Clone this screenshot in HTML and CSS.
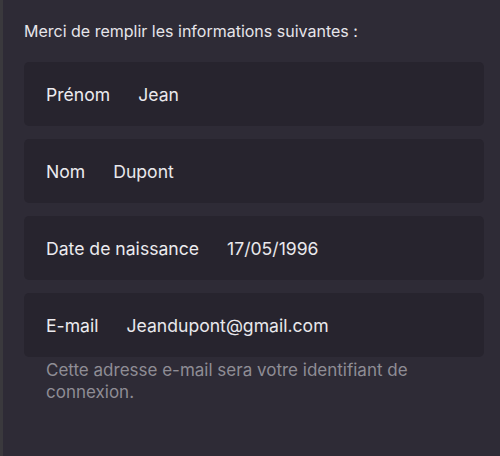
FILE: index.html
```html
<!DOCTYPE html>
<html lang="fr">
<head>
<meta charset="utf-8">
<link rel="stylesheet" href="styles.css">
</head>
<body>
<div class="screen">
  <p class="intro">Merci de remplir les informations suivantes :</p>
  <div class="fields">
    <div class="field"><span class="label">Prénom</span><span class="value">Jean</span></div>
    <div class="field"><span class="label">Nom</span><span class="value">Dupont</span></div>
    <div class="field"><span class="label">Date de naissance</span><span class="value">17/05/1996</span></div>
    <div class="field"><span class="label">E-mail</span><span class="value">Jeandupont@gmail.com</span></div>
  </div>
  <p class="help">Cette adresse e-mail sera votre identifiant de connexion.</p>
</div>
</body>
</html>
```
FILE: styles.css
```css
html, body {
  margin: 0;
  padding: 0;
  height: 100%;
}
body {
  background: #2e2b36;
  font-family: Inter, "Liberation Sans", sans-serif;
  color: #ebeaee;
}
.screen {
  box-sizing: border-box;
  height: 456px;
  border-left: 3px solid #3a393d;
  padding: 19px 16px 0 21px;
}
.intro {
  margin: 0;
  font-size: 16px;
  line-height: 24px;
  color: #e6e5ea;
}
.fields {
  margin-top: 19px;
  display: flex;
  flex-direction: column;
  gap: 13px;
}
.field {
  height: 64px;
  background: #27242e;
  border-radius: 5px;
  display: flex;
  align-items: center;
  padding: 0 22px;
  gap: 28px;
  font-size: 17.6px;
}
.label {
  color: #ecebef;
}
.value {
  color: #e9e8ec;
}
.help {
  margin: 2px 0 0 22px;
  width: 400px;
  font-size: 17px;
  line-height: 22px;
  color: #8f8d95;
}
```
